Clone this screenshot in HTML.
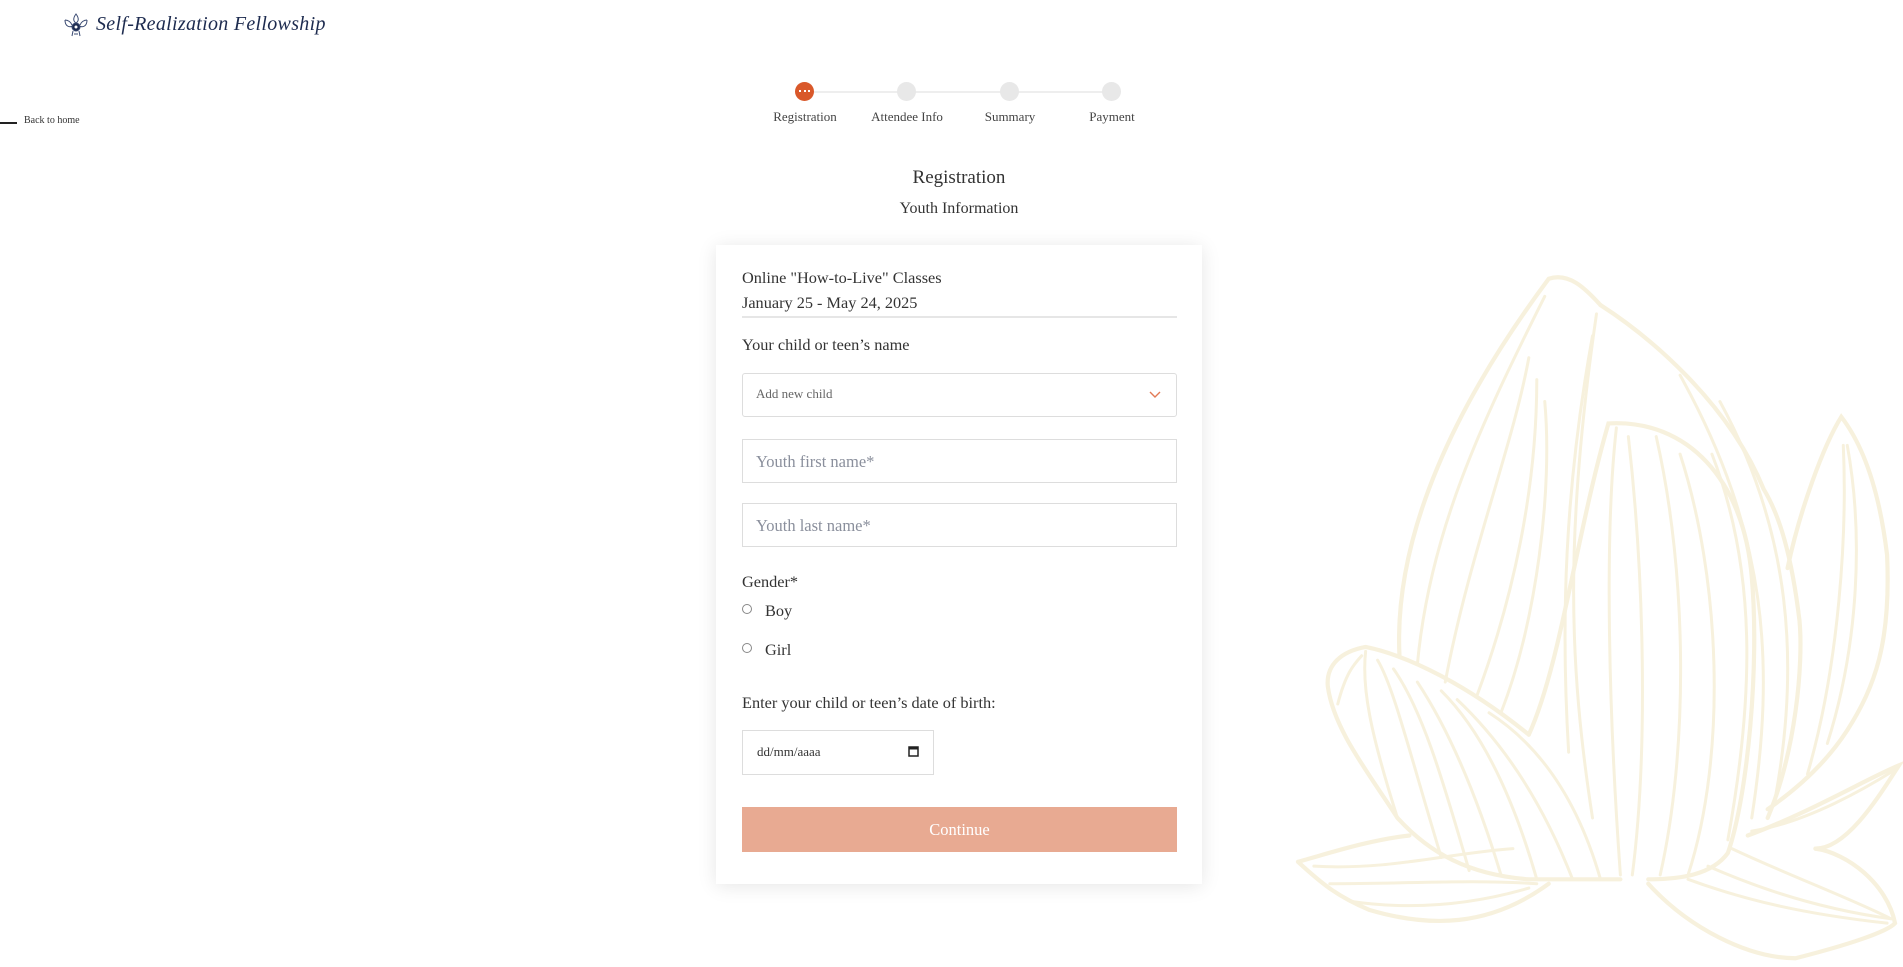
<!DOCTYPE html>
<html><head><meta charset="utf-8">
<style>
*{box-sizing:border-box;margin:0;padding:0}
html,body{width:1903px;height:967px;overflow:hidden;background:#fff;font-family:"Liberation Serif",serif;color:#333}
.abs{position:absolute}
.logo{left:96px;top:13px;font-family:"Liberation Serif",serif;font-style:italic;font-size:20px;color:#1d2b4f;letter-spacing:0.3px}
.back{left:0;top:114px;font-size:10px;color:#333}
.back .ln{position:absolute;left:0;top:8px;width:17px;height:2px;background:#222}
.back span{position:absolute;left:24px;top:1px;white-space:nowrap}
.step{position:absolute;top:82px;width:19px;height:19px;border-radius:50%;background:#e8e8e8}
.sline{position:absolute;top:91px;left:812px;width:300px;height:2px;background:#eee}
.slabel{position:absolute;top:109px;font-size:13px;color:#444;transform:translateX(-50%);white-space:nowrap}
.t1{left:0;width:1918px;text-align:center;top:167px;font-size:19px;color:#333}
.t2{left:0;width:1918px;text-align:center;top:200px;font-size:16px;color:#333}
.card{left:716px;top:245px;width:486px;height:639px;background:#fff;box-shadow:0 2px 18px rgba(0,0,0,0.10)}
.in{position:absolute;left:26px;width:435px}
.txt{font-size:16.3px;color:#333}
.box{position:absolute;left:26px;width:435px;border:1px solid #ddd;background:#fff}
.ph{position:absolute;left:13px;font-size:16.5px;color:#8a8f9c}
.radio{position:absolute;left:26px;width:10px;height:10px;border:1px solid #888;border-radius:50%}
.btn{position:absolute;left:26px;top:562px;width:435px;height:45px;background:#e8aa92;color:#fff;font-size:16.5px;text-align:center;line-height:45px}
</style></head><body>

<div class="abs" style="left:62px;top:12px;width:28px;height:26px">
<svg width="28" height="26" viewBox="0 0 28 26" fill="none" stroke="#3a4a72" stroke-width="1">
<path d="M14 2 C11 6,11 9,14 11 C17 9,17 6,14 2Z"/>
<path d="M3 8 C3 14,7 16,11 14"/><path d="M25 8 C25 14,21 16,17 14"/>
<path d="M3 8 C6 8,9 10,10 13"/><path d="M25 8 C22 8,19 10,18 13"/>
<circle cx="14" cy="15" r="4" fill="#1d2b4f"/><circle cx="14" cy="15" r="1.5" fill="#fff" stroke="none"/>
<path d="M11 19 L10 24 M17 19 L18 24 M12 22 H16"/>
</svg></div>
<div class="abs logo">Self-Realization Fellowship</div>

<div class="abs back"><div class="ln"></div><span>Back to home</span></div>

<div class="sline"></div>
<div class="step" style="left:795px;background:#d9582a"></div>
<div class="abs" style="left:799px;top:90px;width:11px;height:3px;display:flex;justify-content:space-between"><i style="width:2px;height:2px;background:#fff"></i><i style="width:2px;height:2px;background:#fff"></i><i style="width:2px;height:2px;background:#fff"></i></div>
<div class="step" style="left:897px"></div>
<div class="step" style="left:1000px"></div>
<div class="step" style="left:1102px"></div>
<div class="slabel" style="left:805px">Registration</div>
<div class="slabel" style="left:907px">Attendee Info</div>
<div class="slabel" style="left:1010px">Summary</div>
<div class="slabel" style="left:1112px">Payment</div>

<div class="abs t1">Registration</div>
<div class="abs t2">Youth Information</div>

<svg class="abs" style="left:1290px;top:270px" width="613" height="697" viewBox="0 0 1540 1590" preserveAspectRatio="none" fill="none" stroke="#f7f1dd" stroke-width="4.2" stroke-linecap="round">
<g vector-effect="non-scaling-stroke">
<path vector-effect="non-scaling-stroke" d="M275 880 C260 600,420 300,650 20 C700 5,740 40,780 80"/>
<path vector-effect="non-scaling-stroke" d="M780 80 C900 150,1100 300,1190 500 C1230 560,1260 650,1280 800 C1290 900,1270 1100,1200 1250"/>
<path vector-effect="non-scaling-stroke" d="M1250 680 C1280 550,1340 400,1385 335 C1440 400,1480 500,1500 650 C1510 850,1470 950,1400 1050 C1350 1120,1280 1180,1200 1230"/>
<path vector-effect="non-scaling-stroke" d="M600 1060 C680 900,720 600,800 350 C1000 340,1140 480,1160 700 C1180 900,1150 1200,1100 1330 C1060 1380,980 1390,900 1390"/>
<path vector-effect="non-scaling-stroke" d="M600 1060 C450 950,300 880,190 860 C130 870,90 900,95 950 C110 1050,200 1150,270 1250 C350 1330,450 1380,600 1390 L830 1390"/>
<path vector-effect="non-scaling-stroke" d="M20 1350 C100 1330,200 1300,300 1290 M20 1350 C80 1400,120 1430,200 1460 C350 1500,500 1500,650 1400"/>
<path vector-effect="non-scaling-stroke" d="M900 1400 C1000 1500,1150 1570,1270 1570 C1400 1540,1500 1510,1520 1490 C1500 1400,1400 1330,1320 1320"/>
<path vector-effect="non-scaling-stroke" d="M1150 1290 C1300 1240,1450 1160,1530 1130 C1480 1200,1400 1320,1320 1320"/>
</g>
<g stroke-width="3">
<path vector-effect="non-scaling-stroke" d="M320 900 C350 600,480 350,640 60"/><path vector-effect="non-scaling-stroke" d="M390 940 C450 650,560 400,600 200"/>
<path vector-effect="non-scaling-stroke" d="M470 970 C560 750,620 500,620 250"/><path vector-effect="non-scaling-stroke" d="M530 1010 C620 800,660 500,640 300"/>
<path vector-effect="non-scaling-stroke" d="M700 1100 C680 800,690 500,760 150"/><path vector-effect="non-scaling-stroke" d="M760 1250 C700 900,690 600,770 100"/>
<path vector-effect="non-scaling-stroke" d="M830 1380 C800 1000,790 600,820 360"/><path vector-effect="non-scaling-stroke" d="M860 1380 C900 1100,890 700,850 380"/>
<path vector-effect="non-scaling-stroke" d="M930 1380 C1000 1100,1000 700,920 380"/><path vector-effect="non-scaling-stroke" d="M1000 1380 C1100 1100,1080 700,980 420"/>
<path vector-effect="non-scaling-stroke" d="M1100 1300 C1160 1000,1180 700,1060 420"/><path vector-effect="non-scaling-stroke" d="M1160 1250 C1220 900,1200 600,980 240"/>
<path vector-effect="non-scaling-stroke" d="M1220 1200 C1280 900,1260 600,1080 300"/><path vector-effect="non-scaling-stroke" d="M1300 1150 C1380 900,1400 600,1390 400"/>
<path vector-effect="non-scaling-stroke" d="M1350 1080 C1430 850,1440 600,1400 400"/>
<path vector-effect="non-scaling-stroke" d="M120 990 C140 920,160 900,180 880"/><path vector-effect="non-scaling-stroke" d="M270 1250 C200 1050,180 950,190 870"/>
<path vector-effect="non-scaling-stroke" d="M380 1340 C300 1100,260 950,220 890"/><path vector-effect="non-scaling-stroke" d="M450 1370 C380 1150,330 1000,260 910"/>
<path vector-effect="non-scaling-stroke" d="M530 1380 C470 1200,400 1050,320 940"/><path vector-effect="non-scaling-stroke" d="M620 1390 C560 1200,480 1050,380 960"/>
<path vector-effect="non-scaling-stroke" d="M710 1390 C650 1250,560 1100,420 980"/><path vector-effect="non-scaling-stroke" d="M780 1390 C720 1200,620 1080,500 1010"/>
<path vector-effect="non-scaling-stroke" d="M60 1360 C250 1370,400 1330,560 1320"/><path vector-effect="non-scaling-stroke" d="M100 1400 C300 1400,450 1390,620 1400"/>
<path vector-effect="non-scaling-stroke" d="M150 1440 C300 1460,450 1450,600 1410"/>
<path vector-effect="non-scaling-stroke" d="M1000 1390 C1150 1440,1300 1470,1500 1490"/><path vector-effect="non-scaling-stroke" d="M1050 1360 C1200 1420,1350 1460,1510 1480"/>
<path vector-effect="non-scaling-stroke" d="M1110 1320 C1250 1380,1400 1430,1510 1480"/><path vector-effect="non-scaling-stroke" d="M1160 1280 C1300 1260,1450 1180,1520 1140"/>
</g>
</svg>

<div class="abs card">
  <div class="in txt" style="top:23px">Online "How-to-Live" Classes</div>
  <div class="in txt" style="top:48px">January 25 - May 24, 2025</div>
  <div class="in" style="top:71px;height:2px;background:#e6e6e6"></div>
  <div class="in txt" style="top:90px">Your child or teen’s name</div>
  <div class="box" style="top:128px;height:44px;border-radius:3px">
    <div class="ph" style="top:12px;font-size:13px;color:#666">Add new child</div>
    <svg class="abs" style="right:15px;top:17px" width="12" height="8" viewBox="0 0 12 8"><path d="M1 1 L6 6 L11 1" stroke="#e27a55" stroke-width="1.4" fill="none"/></svg>
  </div>
  <div class="box" style="top:194px;height:44px"><div class="ph" style="top:12px">Youth first name*</div></div>
  <div class="box" style="top:258px;height:44px"><div class="ph" style="top:12px">Youth last name*</div></div>
  <div class="in txt" style="top:327px">Gender*</div>
  <div class="radio" style="top:359px"></div>
  <div class="abs txt" style="left:49px;top:356px">Boy</div>
  <div class="radio" style="top:398px"></div>
  <div class="abs txt" style="left:49px;top:395px">Girl</div>
  <div class="in txt" style="top:448px">Enter your child or teen’s date of birth:</div>
  <div class="box" style="top:485px;width:192px;height:45px">
    <div class="abs" style="left:14px;top:13px;font-size:13px;color:#333">dd/mm/aaaa</div>
    <svg class="abs" style="left:165px;top:14px" width="11" height="12" viewBox="0 0 11 12"><rect x="1" y="2" width="9" height="9" fill="none" stroke="#222" stroke-width="1.5"/><rect x="1" y="2" width="9" height="2.5" fill="#222"/></svg>
  </div>
  <div class="btn">Continue</div>
</div>
</body></html>
